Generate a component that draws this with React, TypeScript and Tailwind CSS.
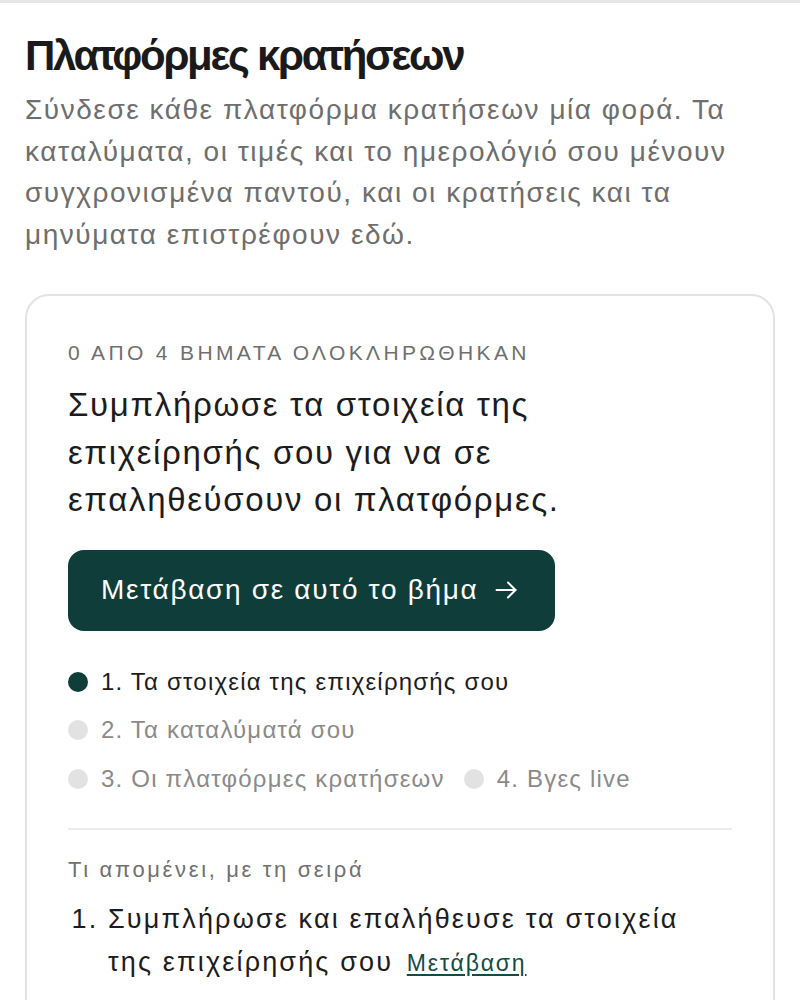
const steps = [
  { label: "1. Τα στοιχεία της επιχείρησής σου", active: true },
  { label: "2. Τα καταλύματά σου", active: false },
  { label: "3. Οι πλατφόρμες κρατήσεων", active: false },
  { label: "4. Βγες live", active: false },
];

const Arrow = () => (
  <svg width="22" height="18" viewBox="0 0 22 18" fill="none" stroke="currentColor" strokeWidth="2" strokeLinecap="round" strokeLinejoin="round">
    <path d="M1.5 9h19" />
    <path d="M13 1.5 20.5 9 13 16.5" />
  </svg>
);

const App = () => {
  return (
    <div className="min-h-screen bg-white border-t-[3px] border-[#e6e6e6] font-['Liberation_Sans',Arial,sans-serif] text-[#1c1c1c]">
      <div className="px-[25px] pt-[27px]">
        <h1 className="text-[42px] leading-[52px] font-bold tracking-[-0.055em] text-[#1a1a1a]">
          Πλατφόρμες κρατήσεων
        </h1>
        <p className="mt-[7px] text-[28px] leading-[41.5px] tracking-[0.055em] text-[#6e6e6e]">
          Σύνδεσε κάθε πλατφόρμα κρατήσεων μία φορά. Τα καταλύματα, οι τιμές και
          το ημερολόγιό σου μένουν συγχρονισμένα παντού, και οι κρατήσεις και τα
          μηνύματα επιστρέφουν εδώ.
        </p>

        <div className="mt-[39px] rounded-[24px] border-2 border-[#e3e3e3] px-[41px] pt-[43px] pb-[40px]">
          <div className="text-[21px] leading-[28px] tracking-[0.16em] text-[#6f6f6f]">
            0 ΑΠΟ 4 ΒΗΜΑΤΑ ΟΛΟΚΛΗΡΩΘΗΚΑΝ
          </div>
          <h2 className="mt-[14px] max-w-[600px] text-[33px] leading-[47.5px] tracking-[0.05em] text-[#1c1c1c]">
            Συμπλήρωσε τα στοιχεία της επιχείρησής σου για να σε επαληθεύσουν οι
            πλατφόρμες.
          </h2>
          <button
            type="button"
            className="mt-[26px] flex h-[81px] items-center gap-[17px] rounded-[16px] bg-[#0f3d3a] pl-[33px] pr-[38px] text-[28px] tracking-[0.06em] text-white"
          >
            Μετάβαση σε αυτό το βήμα
            <Arrow />
          </button>

          <ul className="mt-[37px] flex flex-wrap gap-x-[19px] gap-y-[20.5px]">
            {steps.map((s) => (
              <li
                key={s.label}
                className={`flex h-[28px] items-center gap-[13px] text-[24px] tracking-[0.05em] ${
                  s.active ? "text-[#1c1c1c]" : "text-[#8a8a8a]"
                }`}
              >
                <span
                  className={`h-[20px] w-[20px] shrink-0 rounded-full ${
                    s.active ? "bg-[#0f3d3a]" : "bg-[#e2e2e2]"
                  }`}
                />
                {s.label}
              </li>
            ))}
          </ul>

          <div className="mt-[35px] h-[2px] bg-[#ececec]" />

          <div className="mt-[26px] text-[22px] leading-[28px] tracking-[0.12em] text-[#707070]">
            Τι απομένει, με τη σειρά
          </div>
          <ol className="mt-[14.5px] max-w-[640px] list-decimal pl-[40px] text-[27px] leading-[43px] tracking-[0.08em] text-[#1c1c1c]">
            <li>
              Συμπλήρωσε και επαλήθευσε τα στοιχεία της επιχείρησής σου{" "}
              <a href="#" className="ml-1 text-[23px] leading-[28px] tracking-[0.08em] text-[#0f4d48] underline underline-offset-[3px]">
                Μετάβαση
              </a>
            </li>
          </ol>
        </div>
      </div>
    </div>
  );
};

export default App;
